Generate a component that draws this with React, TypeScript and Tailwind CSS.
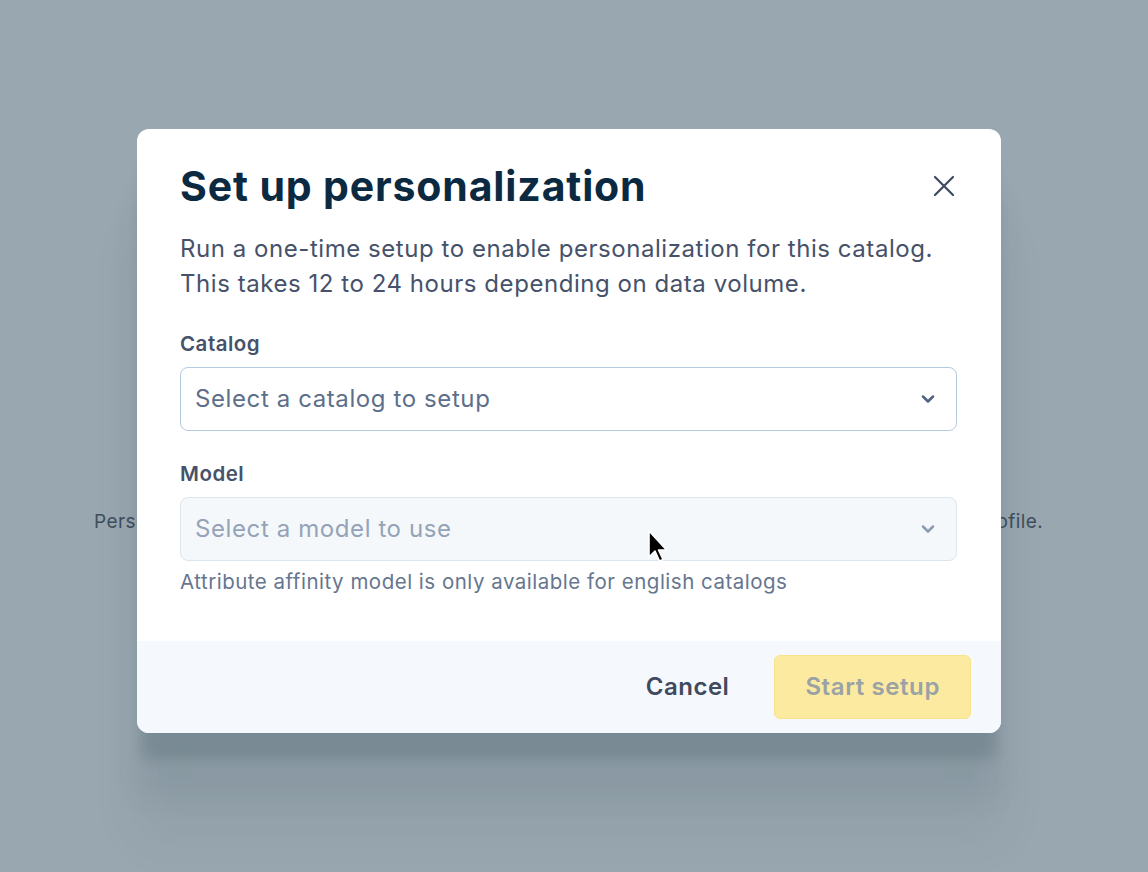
import { ChevronDown } from 'lucide-react';

function SelectBox({ placeholder, disabled }: { placeholder: string; disabled?: boolean }) {
  return (
    <div
      className={
        disabled
          ? 'flex h-[64px] items-center justify-between rounded-[8px] border border-[#dde5ef] bg-[#f5f8fb] pl-[14px] pr-[18px]'
          : 'flex h-[64px] items-center justify-between rounded-[8px] border border-[#b5c9e2] bg-white pl-[14px] pr-[18px]'
      }
    >
      <span
        className={
          disabled
            ? 'text-[24px] tracking-[0.6px] text-[#94a3b8]'
            : 'text-[24px] tracking-[0.6px] text-[#5d6f8a]'
        }
      >
        {placeholder}
      </span>
      <ChevronDown
        className={disabled ? 'h-[20px] w-[20px] text-[#8c9ab0]' : 'h-[20px] w-[20px] text-[#4f6282]'}
        strokeWidth={3}
      />
    </div>
  );
}

function Cursor() {
  return (
    <svg className="absolute left-[647px] top-[529px]" width="22" height="36" viewBox="0 0 22 36">
      <path d="M2 2 L2 28 L8 22 L12.5 32 L16 30.5 L11.5 21 L19.5 21 Z" fill="#000" stroke="#fff" strokeWidth="1.6" strokeLinejoin="round" />
    </svg>
  );
}

export default function App() {
  return (
    <div className="relative h-[872px] w-full overflow-hidden bg-[#99a7b0] font-['Inter',sans-serif]">
      <div className="pt-[509px] pl-[94px]">
        <p className="w-[949px] whitespace-nowrap text-[19px] leading-[26px] tracking-[0.4px] text-[#3f4e5c] [text-align-last:justify]">
          Personalization tailors the results for every shopper based on their activity and their profile.
        </p>
      </div>

      <div className="absolute left-[137px] top-[129px] w-[864px] rounded-[12px] bg-white shadow-[0_30px_12px_-4px_rgba(40,60,75,0.16),0_64px_28px_0_rgba(40,60,75,0.08),0_104px_50px_4px_rgba(40,60,75,0.05)]">
        <div className="px-[43px] pt-[33px] pb-[46px]">
          <div className="flex items-center justify-between">
            <h1 className="text-[41px] font-bold leading-[48px] tracking-[0.85px] text-[#0b2a42]">Set up personalization</h1>
            <svg className="mr-[3px]" width="22" height="22" viewBox="0 0 22 22">
              <path d="M2 2 L20 20 M20 2 L2 20" stroke="#3d4a60" strokeWidth="2.2" strokeLinecap="round" />
            </svg>
          </div>
          <p className="mt-[21px] text-[24px] leading-[35px] tracking-[0.55px] text-[#46526a]">
            Run a one-time setup to enable personalization for this catalog.
            <br />
            This takes 12 to 24 hours depending on data volume.
          </p>

          <div className="mt-[30px] w-[777px]">
            <div className="mb-[10px] text-[20.5px] font-semibold leading-[26px] tracking-[0.5px] text-[#46526a]">Catalog</div>
            <SelectBox placeholder="Select a catalog to setup" />
          </div>

          <div className="mt-[30px] w-[777px]">
            <div className="mb-[10px] text-[20.5px] font-semibold leading-[26px] tracking-[0.5px] text-[#46526a]">Model</div>
            <SelectBox placeholder="Select a model to use" disabled />
            <div className="mt-[8px] text-[20.5px] leading-[26px] tracking-[0.5px] text-[#66768e]">
              Attribute affinity model is only available for english catalogs
            </div>
          </div>
        </div>

        <div className="flex h-[92px] items-center justify-end gap-[30px] rounded-b-[12px] bg-[#f5f8fc] pr-[30px]">
          <button className="px-[15px] text-[24px] font-semibold tracking-[0.5px] text-[#3f4a5c]">Cancel</button>
          <button className="h-[64px] rounded-[6px] border border-[#f8e38a] bg-[#fbeaa0] px-[30px] text-[24px] font-semibold tracking-[0.6px] text-[#9aa2a6]">
            Start setup
          </button>
        </div>
      </div>

      <Cursor />
    </div>
  );
}
